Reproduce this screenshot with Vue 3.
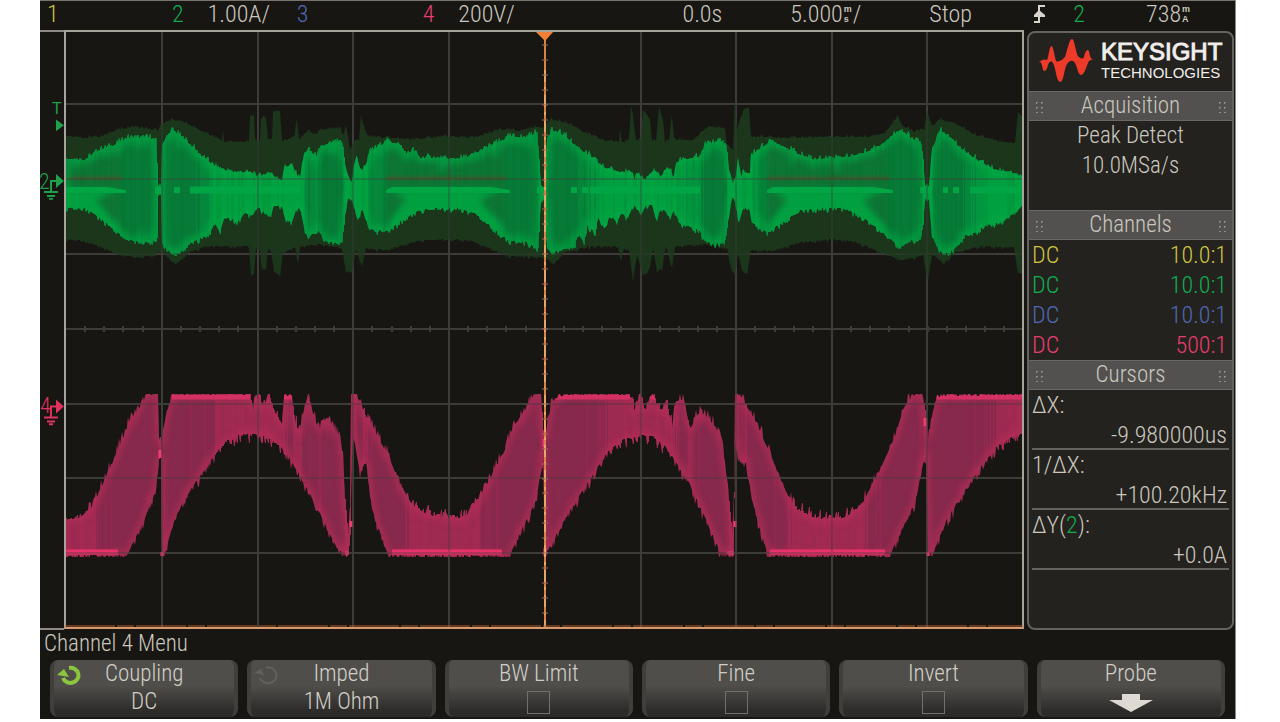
<template>
  <main class="scope">
    <header class="status-bar">
      <div class="yellow">1</div>
      <div><span class="green">2</span><span class="scale">1.00A/</span></div>
      <div class="blue">3</div>
      <div><span class="pink">4</span><span class="scale">200V/</span></div>
      <div>0.0s</div>
      <div class="with-unit">5.000<span class="unit"><i>m</i><i>s</i></span>/</div>
      <div>Stop</div>
      <div>
        <svg class="edge-icon" viewBox="0 0 14 20" aria-label="Rising edge">
          <path d="M1 18h5V2h6" fill="none" stroke="#d8d4cc" stroke-width="2" />
          <path d="M6 6l6 5v2H1v-2z" fill="#d8d4cc" />
        </svg>
      </div>
      <div class="green">2</div>
      <div class="with-unit">738<span class="unit"><i>m</i><i>A</i></span></div>
    </header>

    <div class="middle">
      <svg class="markers" viewBox="0 0 24 600">
        <g fill="#1fa04b" stroke="none">
          <text x="12" y="83" class="marker-small">T</text>
          <path d="M16 88l8 6-8 6z" />
          <text x="-1" y="158" class="marker-text">2</text>
          <path d="M16 143l8 7-8 7z" />
          <path d="M17 150h-6v11M4 161h14M7 165h8M9 168h4" fill="none" stroke="#1fa04b" stroke-width="2" />
        </g>
        <g fill="#e0325f">
          <text x="0" y="384" class="marker-text">4</text>
          <path d="M16 370l8 7-8 7z" />
          <path d="M17 377h-6v11M4 388h14M7 392h8M9 395h4" fill="none" stroke="#e0325f" stroke-width="2" />
        </g>
      </svg>

      <svg class="plot" viewBox="64 30 960 600" preserveAspectRatio="none">
        <defs>
          <clipPath id="clip-current"><path :d="currentArea" /></clipPath>
          <clipPath id="clip-voltage"><path :d="voltageArea" /></clipPath>
          <filter id="soft" x="-5%" y="-20%" width="110%" height="140%"><feGaussianBlur stdDeviation="3" /></filter>
        </defs>

        <path :d="gridLines" class="grid" />
        <path :d="axisTicks" class="grid" />

        <!-- channel 2, current -->
        <path :d="currentHalo" fill="#1c361c" />
        <path :d="currentArea" fill="#00a040" />
        <path v-for="b in currentBands" :key="b.color" :d="b.d" :fill="b.color" />
        <g clip-path="url(#clip-current)">
          <path
            v-for="p in plateaus"
            :key="p[0]"
            :d="`M${p[0]} 145H${p[1] - 5}V250H${p[0]}z`"
            fill="#077436"
            filter="url(#soft)"
          />
          <path
            v-for="p in plateaus"
            :key="'b' + p[0]"
            :d="`M${p[0]} 178H${p[1] - 4}`"
            stroke="#3c5a2b"
            stroke-width="5"
            opacity="0.6"
          />
          <path :d="currentArea" fill="none" stroke="#00a644" stroke-width="9" opacity="0.7" filter="url(#soft)" />
          <path :d="currentStreaks" stroke="#00702f" opacity="0.25" />
          <path
            v-for="p in plateaus"
            :key="'g' + p[0]"
            :d="`M${p[0] + 5} 190H${p[1] - 8}L${p[1] - 30} 200L${p[1] - 8} 228V250H${p[0] + 5}V220L${p[0] + 20} 200z`"
            fill="#00a041"
            filter="url(#soft)"
          />
          <path
            v-for="p in plateaus"
            :key="'l' + p[0]"
            :d="`M${p[0]} 190L${p[0] + 6} 187H${p[1] - 20}L${p[1]} 190V193H${p[0]}z`"
            fill="#00a644"
          />
          <path d="M190 190H300M590 190H700M970 190H1022" stroke="#00a644" stroke-width="7" />
          <path d="M155 190H162M174 190H180M537 190H545M571 190H577M582 190H588M920 190H932M943 190H948M953 190H959" stroke="#00a644" stroke-width="6" />
        </g>

        <!-- channel 4, voltage -->
        <path :d="voltageArea" fill="#87294c" />
        <path :d="voltageNarrow" fill="#9c2a51" />
        <g clip-path="url(#clip-voltage)">
          <path :d="voltageArea" fill="none" stroke="#b52d59" stroke-width="7" opacity="0.7" filter="url(#soft)" />
          <path :d="voltageStreaks" stroke="#c22c5c" opacity="0.3" />
          <path d="M172 397H250M284 397H292M555 397H630M650 397H656M935 397H1022" stroke="#d33164" stroke-width="5" />
          <path d="M65 549H122M388 549H506M768 549H888" stroke="#c42e5d" stroke-width="8" filter="url(#soft)" />
          <path d="M65 552H118M392 552H502M770 552H885" stroke="#e93269" stroke-width="5" />
        </g>
        <path d="M160 450v8M351 521v6M544 439v8M735 521v6M925 418v8M162 552v4M345 553h4M545 548v8M928 552v4M727 553h7" stroke="#f03a70" stroke-width="3" />

        <path :d="gridLines" class="grid over" />

        <path d="M545 32V628" stroke="#dd8247" stroke-width="2" />
        <path d="M545 70V628" stroke="#f0c888" stroke-dasharray="12 5 3 5" />
        <path :d="centreTicks" stroke="#a9694a" />
        <path d="M535 31H554L545 41z" fill="#f08038" />

        <path d="M65 30V629" class="frame" />
        <path d="M1023 30V629" class="frame" />
        <path d="M64 31H1024" class="frame" />
        <path d="M65 628H1023" stroke="#d89a6c" stroke-width="2" />
        <path d="M65 626H1023" stroke="#b05c2e" stroke-dasharray="50 2 17 2" />
      </svg>

      <aside class="side">
        <div class="brand">
          <svg class="logo" viewBox="0 0 54 44" aria-hidden="true">
            <path
              d="M0 22Q3 22 4 20.500Q6 20.500 8 21C10 17 10 8 12.500 7C15 8 16 23 18 22.500C21 23 24 20 26 18C28 13 30 0 33 0C36 0 37 17 40 18C43 20 44 20 45 18C46 12 48 11 49 11C51 12 50 20 54 20.500C52 21 50 21 49 24C47 29 45 36 42 36C39 36 38 27 36 24C34 21 31 21 28 25C25 30 25 43 21 43C17 42 17 29 14 24C12 21 10 23 9 26C8 30 7 32 5 32C3 31 4 24 0 22z"
              fill="#ee3a28"
            />
          </svg>
          <div class="brand-name">
            <strong>KEYSIGHT</strong>
            <span>TECHNOLOGIES</span>
          </div>
        </div>

        <h2><i class="grip"></i>Acquisition<i class="grip"></i></h2>
        <div class="acquisition">
          <p>Peak Detect</p>
          <p>10.0MSa/s</p>
        </div>

        <h2><i class="grip"></i>Channels<i class="grip"></i></h2>
        <table class="channels">
          <tbody>
            <tr v-for="(c, i) in channels" :key="i" :class="c.color">
              <td>DC</td>
              <td>{{ c.probe }}</td>
            </tr>
          </tbody>
        </table>

        <h2><i class="grip"></i>Cursors<i class="grip"></i></h2>
        <dl class="cursors">
          <div>
            <dt>ΔX:</dt>
            <dd>-9.980000us</dd>
          </div>
          <div>
            <dt>1/ΔX:</dt>
            <dd>+100.20kHz</dd>
          </div>
          <div>
            <dt>ΔY(<span class="green">2</span>):</dt>
            <dd>+0.0A</dd>
          </div>
        </dl>
      </aside>
    </div>

    <h1>Channel 4 Menu</h1>

    <nav class="softkeys">
      <button type="button" class="key">
        <svg class="knob" viewBox="0 0 26 22"><path d="M12 4A8 7.500 0 1 1 6 14" fill="none" stroke="#8cc63f" stroke-width="4" /><path d="M0 11L7 5l5 8z" fill="#8cc63f" /></svg>
        <span>Coupling</span>
        <span>DC</span>
      </button>
      <button type="button" class="key">
        <svg class="knob" viewBox="0 0 26 22"><path d="M12 3.500A8.500 8 0 1 1 6 14" fill="none" stroke="#62615e" stroke-width="2" /><path d="M0 9L7 5l3 6z" fill="#62615e" /></svg>
        <span>Imped</span>
        <span>1M Ohm</span>
      </button>
      <label v-for="name in toggles" :key="name" class="key">
        <span>{{ name }}</span>
        <input type="checkbox" />
      </label>
      <button type="button" class="key">
        <span>Probe</span>
        <svg class="arrow" viewBox="0 0 44 18"><path d="M13 0H31V6H44L22 18L0 6H13z" fill="#dedad3" /></svg>
      </button>
    </nav>
  </main>
</template>

<script setup>
import { ref } from 'vue'

const channels = ref([
  { color: 'yellow', probe: '10.0:1' },
  { color: 'green', probe: '10.0:1' },
  { color: 'blue', probe: '10.0:1' },
  { color: 'pink', probe: '500:1' }
])

const toggles = ['BW Limit', 'Fine', 'Invert']

// flat part of the current envelope, [from, to]
const plateaus = [[4, 126], [386, 510], [767, 893]]

// envelopes as flat lists: x, y, x, y ...
const haloTop = [
  65, 136, 85, 138, 100, 137, 118, 130, 135, 127, 150, 130, 158, 131, 162, 124, 172, 120, 185, 123, 205, 133, 220, 140,
  222, 141, 223, 129, 224, 142, 249, 142, 250, 116, 254, 116, 255, 142, 260, 141, 261, 119, 266, 118, 268, 141, 272, 138,
  273, 112, 280, 111, 282, 141, 294, 138, 297, 120, 299, 140, 308, 131, 315, 135, 322, 130, 341, 129, 343, 137, 346, 125,
  350, 150, 354, 142, 359, 140, 361, 116, 364, 128, 368, 137, 390, 138, 412, 140, 440, 137, 475, 138, 500, 130, 520, 131,
  538, 127, 543, 128, 550, 120, 570, 124, 585, 133, 605, 141, 619, 142, 620, 128, 622, 142, 629, 141, 631, 108, 633, 118,
  636, 141, 641, 138, 643, 110, 650, 120, 652, 142, 656, 141, 659, 108, 663, 120, 665, 142, 669, 140, 672, 115, 674, 140,
  695, 140, 702, 132, 710, 127, 725, 129, 727, 145, 733, 150, 735, 97, 737, 130, 740, 120, 745, 109, 749, 108, 751, 137,
  790, 138, 845, 137, 870, 137, 885, 133, 898, 116, 902, 126, 915, 132, 924, 130, 927, 112, 932, 127, 940, 120, 958, 125,
  975, 135, 1000, 142, 1015, 143, 1018, 112, 1022, 118
]
const haloBottom = [
  65, 239, 80, 240, 100, 246, 120, 255, 135, 257, 155, 255, 162, 250, 172, 262, 177, 263, 190, 252, 205, 246, 249, 246,
  251, 275, 254, 274, 256, 248, 260, 250, 262, 269, 266, 268, 268, 248, 271, 250, 274, 271, 280, 276, 283, 252, 295, 247,
  298, 264, 300, 246, 320, 244, 342, 248, 346, 272, 352, 270, 356, 250, 362, 266, 366, 248, 388, 250, 400, 245, 420, 240,
  450, 239, 470, 240, 490, 248, 510, 256, 530, 256, 543, 257, 554, 263, 565, 252, 590, 246, 618, 246, 621, 260, 624, 248,
  629, 250, 633, 280, 637, 254, 643, 276, 650, 268, 653, 248, 657, 270, 662, 268, 666, 246, 672, 268, 675, 246, 705, 244,
  727, 248, 731, 268, 735, 275, 738, 252, 742, 270, 747, 274, 751, 250, 775, 250, 800, 242, 830, 239, 855, 241, 880, 252,
  902, 260, 923, 255, 928, 280, 932, 254, 944, 263, 955, 252, 980, 246, 1014, 247, 1018, 272, 1022, 274
]
const currentTop = [
  65, 159, 85, 160, 100, 150, 115, 145, 128, 138, 150, 138, 156, 142, 158, 185, 161, 188, 162, 145, 172, 130, 185, 140,
  200, 155, 215, 167, 230, 172, 252, 173, 256, 178, 260, 173, 263, 179, 267, 173, 272, 173, 275, 178, 282, 180, 284, 168,
  291, 165, 297, 175, 300, 178, 304, 155, 308, 150, 316, 157, 322, 147, 335, 143, 342, 143, 345, 165, 350, 182, 352, 183,
  354, 165, 357, 158, 361, 172, 366, 165, 370, 152, 388, 141, 400, 146, 407, 155, 413, 150, 420, 158, 430, 158, 450, 160,
  470, 157, 485, 149, 500, 142, 510, 137, 525, 138, 537, 133, 541, 185, 544, 188, 547, 140, 552, 131, 565, 136, 575, 146,
  590, 157, 605, 168, 615, 171, 630, 173, 634, 180, 637, 173, 645, 180, 652, 173, 656, 172, 660, 179, 665, 170, 670, 169,
  674, 180, 676, 163, 685, 159, 700, 158, 705, 145, 720, 141, 726, 145, 729, 170, 733, 184, 736, 178, 738, 158, 741, 178,
  743, 173, 750, 173, 751, 155, 760, 149, 772, 141, 785, 148, 800, 155, 815, 160, 830, 158, 850, 157, 865, 153, 880, 146,
  890, 138, 900, 130, 905, 133, 912, 140, 920, 142, 923, 160, 925, 185, 929, 188, 932, 150, 934, 145, 940, 131, 950, 138,
  962, 150, 980, 162, 995, 170, 1015, 173, 1022, 178
]
const currentBottom = [
  65, 207, 85, 208, 100, 217, 115, 230, 127, 240, 150, 242, 157, 238, 158, 195, 161, 193, 162, 243, 172, 254, 178, 254,
  190, 243, 210, 233, 214, 222, 220, 232, 224, 218, 232, 218, 237, 222, 245, 213, 253, 215, 258, 206, 262, 210, 270, 216,
  274, 205, 282, 207, 286, 219, 292, 222, 296, 210, 300, 207, 305, 230, 308, 237, 318, 230, 325, 240, 338, 244, 342, 240,
  345, 215, 348, 198, 352, 195, 356, 215, 358, 220, 362, 208, 369, 228, 375, 230, 388, 231, 405, 217, 420, 210, 435, 208,
  460, 208, 475, 213, 490, 225, 510, 241, 525, 241, 538, 248, 541, 200, 545, 198, 547, 248, 552, 252, 565, 248, 575, 246,
  577, 232, 584, 242, 587, 225, 595, 232, 598, 218, 605, 228, 610, 215, 617, 222, 620, 212, 628, 218, 632, 207, 636, 205,
  641, 215, 646, 205, 652, 205, 656, 218, 662, 207, 670, 217, 674, 210, 680, 223, 700, 230, 704, 240, 715, 244, 725, 240,
  729, 215, 732, 197, 735, 200, 739, 222, 743, 208, 749, 207, 752, 222, 768, 232, 785, 220, 800, 210, 815, 208, 845, 208,
  860, 215, 875, 226, 890, 238, 900, 248, 910, 240, 920, 240, 923, 225, 925, 197, 929, 200, 932, 235, 938, 248, 944, 254,
  955, 248, 965, 235, 975, 232, 985, 225, 1000, 222, 1015, 212, 1022, 205
]
const voltageTop = [
  65, 520, 80, 518, 92, 507, 105, 480, 120, 446, 130, 420, 138, 411, 148, 395, 158, 394, 159, 440, 161, 448, 163, 430,
  172, 395, 250, 395, 253, 412, 257, 398, 259, 393, 263, 412, 268, 393, 275, 414, 282, 424, 284, 396, 291, 396, 295, 424,
  299, 432, 303, 416, 308, 394, 313, 414, 320, 434, 323, 420, 330, 423, 340, 440, 343, 457, 345, 500, 348, 535, 350, 510,
  351, 394, 355, 394, 360, 402, 366, 418, 372, 426, 380, 441, 390, 460, 400, 485, 412, 506, 425, 514, 445, 519, 465, 518,
  475, 505, 490, 480, 505, 450, 515, 425, 525, 411, 533, 396, 541, 394, 543, 430, 545, 440, 548, 420, 553, 402, 565, 395,
  628, 395, 634, 412, 640, 394, 645, 412, 652, 394, 660, 414, 666, 402, 672, 428, 676, 402, 684, 400, 690, 430, 700, 412,
  713, 424, 722, 440, 728, 490, 732, 535, 734, 500, 735, 391, 745, 404, 757, 424, 770, 455, 785, 490, 795, 509, 815, 519,
  845, 518, 862, 505, 880, 470, 895, 437, 903, 410, 912, 397, 922, 394, 925, 410, 928, 440, 931, 425, 935, 402, 945, 396,
  1022, 395
]
const voltageBottom = [
  65, 555, 127, 555, 135, 538, 145, 517, 155, 490, 158, 470, 159, 457, 161, 455, 162, 555, 165, 552, 175, 517, 190, 490,
  210, 461, 225, 441, 240, 434, 258, 434, 272, 439, 285, 451, 300, 475, 320, 513, 337, 548, 348, 555, 350, 530, 352, 450,
  353, 430, 356, 450, 360, 472, 366, 460, 372, 508, 388, 555, 510, 555, 520, 532, 535, 502, 541, 472, 543, 450, 545, 555,
  550, 546, 570, 509, 590, 479, 607, 452, 620, 440, 640, 435, 655, 436, 668, 449, 690, 484, 705, 517, 720, 551, 733, 555,
  735, 440, 740, 462, 746, 462, 752, 498, 768, 555, 890, 555, 900, 533, 915, 502, 922, 468, 926, 450, 928, 555, 933, 553,
  945, 522, 960, 497, 980, 467, 1000, 442, 1022, 432
]

// repeatable noise so the traces look sampled
const noise = (x) => {
  const n = Math.sin(x * 12.9898) * 43758.5453
  return n - Math.floor(n)
}

const sample = (points, x) => {
  let i = 0
  while (i < points.length - 4 && points[i + 2] < x) i += 2
  const t = (x - points[i]) / (points[i + 2] - points[i])
  return points[i + 1] + (points[i + 3] - points[i + 1]) * Math.min(1, Math.max(0, t))
}

const buildColumns = (top, bottom, jitter, min = 0, max = 600) => {
  const columns = []
  for (let x = 65; x < 1023; x++) {
    const up = noise(x) ** 3 * jitter
    const down = noise(x + 7000) ** 3 * jitter
    columns.push({
      x,
      y1: Math.max(min, Math.round(sample(top, x) - up)),
      y2: Math.min(max, Math.round(sample(bottom, x) + down))
    })
  }
  return columns
}

const areaPath = (columns) => {
  const upper = columns.map((c) => `${c.x} ${c.y1}`)
  const lower = columns.map((c) => `${c.x} ${c.y2}`).reverse()
  return 'M' + upper.concat(lower).join('L') + 'z'
}

const columnsPath = (columns, min, max) =>
  columns
    .filter((c) => c.y2 - c.y1 >= min && c.y2 - c.y1 < max)
    .map((c) => `M${c.x} ${c.y1}h1V${c.y2}h-1z`)
    .join('')

const current = buildColumns(currentTop, currentBottom, 5)
const voltage = buildColumns(voltageTop, voltageBottom, 10, 394, 557)
const currentHalo = areaPath(buildColumns(haloTop, haloBottom, 3))
const currentArea = areaPath(current)
const voltageArea = areaPath(voltage)
const voltageNarrow = columnsPath(voltage, 0, 62)

// the taller the column, the less time the beam spends in it
const currentBands = [
  { color: '#03953f', d: columnsPath(current, 66, 78) },
  { color: '#05883b', d: columnsPath(current, 78, 90) },
  { color: '#077a37', d: columnsPath(current, 90, 200) }
]

const streaks = (columns, share) =>
  columns
    .filter((c) => noise(c.x + 300) < share)
    .map((c) => `M${c.x} ${c.y1}V${c.y2}`)
    .join('')
const currentStreaks = streaks(current, 0.2)
const voltageStreaks = streaks(voltage.filter((c) => c.y2 - c.y1 < 95), 0.22)

const columnsX = [162, 258, 353, 449, 545, 641, 736, 832, 927]
const rowsY = [104, 179, 254, 329, 404, 478, 553]
const gridLines = columnsX.map((x) => `M${x} 32V627`).join('') + rowsY.map((y) => `M66 ${y}H1022`).join('')

const axisTicks = Array.from({ length: 49 }, (_, i) => `M${Math.round(66 + (i + 1) * 19.15)} 326v6`).join('')
const centreTicks = Array.from({ length: 39 }, (_, i) => `M542 ${Math.round(30 + (i + 1) * 14.95)}h6`).join('')
</script>

<style>
body {
  margin: 0;
  background: #fff;
}
</style>

<style scoped>
.scope {
  box-sizing: border-box;
  margin: 0 44px 0 40px;
  padding-bottom: 2px;
  background: #171612;
  border-top: 1px solid #77746e;
  border-right: 1px solid #8b8985;
  color: #cbc7bf;
  font-family: "Roboto Condensed", "Liberation Sans", sans-serif;
  font-size: 23px;
  font-weight: 300;
  line-height: 30px;
}

h1,
h2,
p,
dl,
dd {
  margin: 0;
  font-size: 23px;
  font-weight: 300;
}

i {
  font-style: normal;
}

.yellow {
  color: #d0c440;
}

.green {
  color: #12ad50;
}

.blue {
  color: #5068b4;
}

.pink {
  color: #e83d6e;
}

.status-bar {
  display: grid;
  grid-template-columns: 125fr 125fr 126fr 260fr 108fr 139fr 104fr 40fr 73fr 89fr;
  padding-left: 7px;
  height: 29px;
  font-size: 24px;
  line-height: 26px;
  white-space: nowrap;
}

.status-bar > div {
  min-width: 0;
}

.scale {
  margin-left: 24px;
}

.with-unit {
  display: flex;
}

.unit {
  display: flex;
  flex-direction: column;
  padding: 3px 1px 0;
  font-family: "Liberation Sans", sans-serif;
  font-size: 9px;
  font-weight: 700;
  line-height: 10px;
}

.edge-icon {
  display: block;
  width: 14px;
  height: 20px;
  margin-top: 3px;
}

.middle {
  display: flex;
  height: 600px;
}

.markers {
  flex: 0 0 24px;
  width: 24px;
  height: 600px;
  box-sizing: border-box;
  border-top: 2px solid #8e8a83;
  border-bottom: 2px solid #8e8a83;
  overflow: visible;
}

.marker-text {
  font-size: 22px;
}

.marker-small {
  font-family: "Liberation Sans", sans-serif;
  font-size: 16px;
  font-weight: 400;
}

.plot {
  flex: 1;
  min-width: 0;
  height: 600px;
}

.grid {
  fill: none;
  stroke: #3e3c38;
  stroke-width: 2;
}

.over {
  opacity: 0.35;
}

.frame {
  stroke: #a8a49c;
  stroke-width: 2;
}

.side {
  box-sizing: border-box;
  flex: 0 0 207px;
  margin: 1px 1px 0 3px;
  background: #23221e;
  border: 2px solid #65635f;
  border-radius: 8px;
  overflow: hidden;
}

.brand {
  display: flex;
  gap: 8px;
  height: 58px;
  padding-left: 10px;
  box-sizing: border-box;
}

.logo {
  width: 54px;
  height: 44px;
  margin-top: 6px;
}

.brand-name {
  display: flex;
  flex-direction: column;
  padding-top: 6px;
  color: #f1eeea;
  font-family: "Liberation Sans", sans-serif;
}

.brand-name strong {
  font-size: 24px;
  font-weight: 400;
  line-height: 26px;
  -webkit-text-stroke: 1px #f1eeea;
}

.brand-name span {
  font-size: 15px;
  font-weight: 400;
  line-height: 15px;
}

h2 {
  display: flex;
  justify-content: space-between;
  align-items: center;
  box-sizing: border-box;
  height: 30px;
  padding: 0 5px;
  background: #52514f;
  border-top: 1px solid #6a6865;
  border-bottom: 1px solid #6a6865;
  line-height: 28px;
}

.grip {
  width: 10px;
  height: 13px;
  background: radial-gradient(#8f8c86 1px, transparent 1px) 0 0 / 5px 5px;
}

.acquisition {
  height: 89px;
  text-align: center;
}

.channels {
  width: 100%;
  border-collapse: collapse;
  font-size: 24px;
}

.channels td {
  height: 30px;
  padding: 0 5px 0 3px;
}

.channels td:last-child {
  text-align: right;
}

.cursors {
  padding: 0 3px;
  font-size: 24px;
}

.cursors div {
  box-sizing: border-box;
  height: 60px;
  padding-right: 2px;
  border-bottom: 2px solid #65635f;
}

.cursors dd {
  font-size: 24px;
  text-align: right;
}

h1 {
  height: 30px;
  padding-left: 4px;
  line-height: 28px;
}

.softkeys {
  display: grid;
  grid-template-columns: repeat(6, minmax(0, 1fr));
  gap: 9px;
  padding: 0 10px;
}

.key {
  position: relative;
  display: flex;
  flex-direction: column;
  align-items: center;
  box-sizing: border-box;
  height: 57px;
  margin: 0;
  padding: 0;
  background: linear-gradient(#4f4e4b 0%, #4f4e4b 45%, #2c2b29 90%);
  border: 0 solid #403f3c;
  border-width: 0 4px;
  border-radius: 8px;
  color: #d2cec6;
  font: inherit;
  line-height: 28px;
}

.knob {
  position: absolute;
  top: 4px;
  left: 3px;
  width: 26px;
  height: 22px;
}

.key input {
  appearance: none;
  box-sizing: border-box;
  width: 23px;
  height: 23px;
  margin: 3px 0 0;
  border: 1px solid #73706a;
}

.arrow {
  width: 44px;
  height: 18px;
  margin-top: 6px;
}
</style>
